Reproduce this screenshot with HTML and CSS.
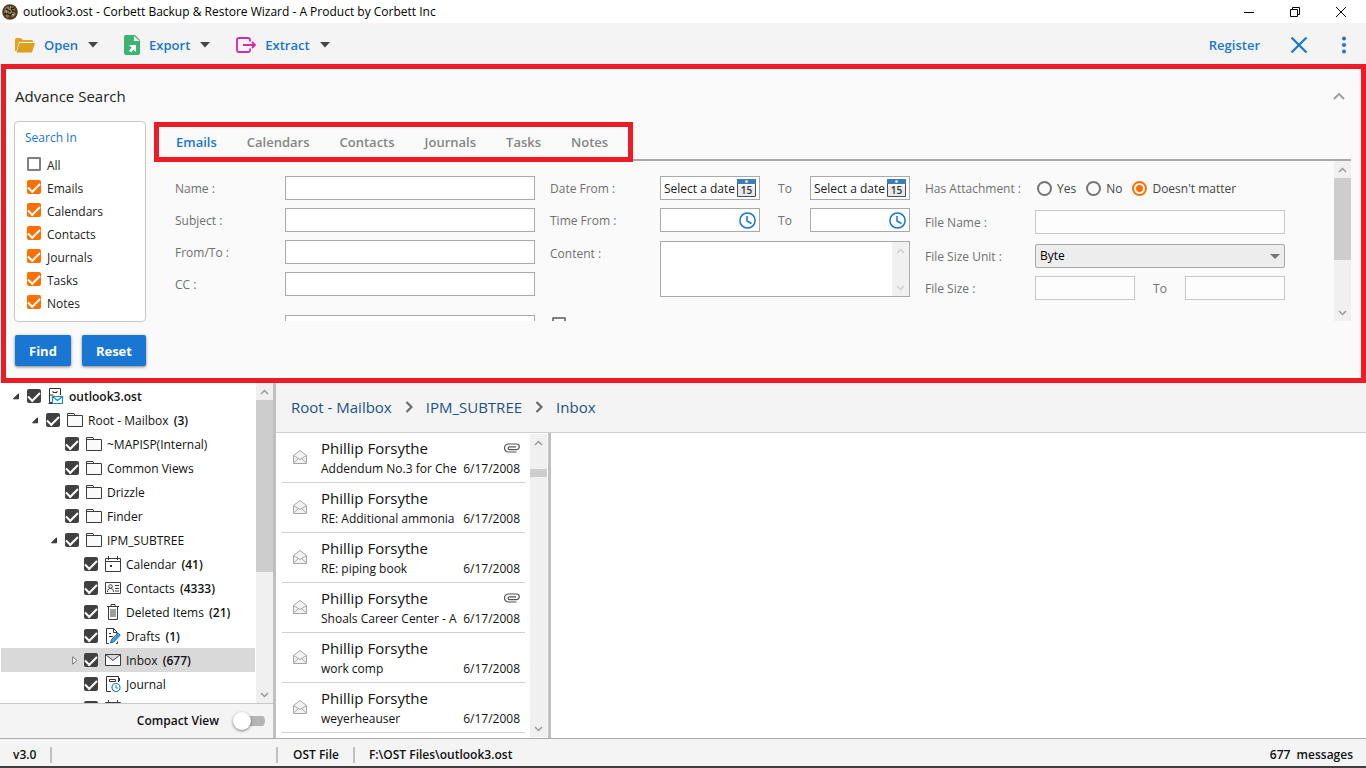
FILE: index.html
```html
<!DOCTYPE html>
<html lang="en">
<head>
    <meta charset="UTF-8">
    <meta name="viewport" content="width=device-width, initial-scale=1.0">
    <title>Corbett Backup &amp; Restore Wizard</title>
    <link rel="stylesheet" href="styles.css">
</head>
<body>
    <!-- Shared icons -->
    <svg class="sprite" aria-hidden="true">
        <symbol id="i-down" viewBox="0 0 10 6"><path d="M0 0h10L5 5.500z" fill="#444"/></symbol>
        <symbol id="i-chev-up" viewBox="0 0 9 6"><path d="M1 5l3.500-3.500L8 5" fill="none" stroke="currentColor" stroke-width="1.500"/></symbol>
        <symbol id="i-chev-down" viewBox="0 0 9 6"><path d="M1 1l3.500 3.500L8 1" fill="none" stroke="currentColor" stroke-width="1.500"/></symbol>
        <symbol id="i-crumb" viewBox="0 0 8 12"><path d="M1.500 1l5 5-5 5" fill="none" stroke="#6b6b6b" stroke-width="2.200"/></symbol>
        <symbol id="i-open-node" viewBox="0 0 7 7"><path d="M5.500 0.800v5h-5z" fill="#404040" stroke="#333"/></symbol>
        <symbol id="i-closed-node" viewBox="0 0 6 9"><path d="M0.700 0.800v7.400L5 4.500z" fill="#fff" stroke="#777"/></symbol>
        <symbol id="i-folder" viewBox="0 0 16 16"><path d="M0.500 14.500v-13h6.500l1 2h7.500v11zM0.500 3.500h7.500" fill="#fafafa" stroke="#3c3c3c"/></symbol>
        <symbol id="i-store" viewBox="0 0 16 16"><path d="M4 14.500H1.500V0.500h11V7M1.500 7h4M5 3v1.500h4V3M0.500 15.500h4" fill="none" stroke="#333"/><path d="M4.500 8.500h10v7h-10zM4.500 8.500l5 4 5-4" fill="#fff" stroke="#1e86d0" stroke-width="1.200"/></symbol>
        <symbol id="i-calendar" viewBox="0 0 16 16"><path d="M0.500 2.500h15v13H0.500zM0.500 5.500h15M3.500 0v4M12.500 0v4" fill="none" stroke="#3c3c3c"/><path d="M5 9h2v2H5z" fill="#333"/></symbol>
        <symbol id="i-contacts" viewBox="0 0 16 16"><path d="M0.500 2.500h15v11H0.500z" fill="none" stroke="#3c3c3c"/><circle cx="5.500" cy="6.500" r="1.800" fill="none" stroke="#3c3c3c"/><path d="M2.500 12c0-5 6-5 6 0M10 5.500h4M10 8.500h4M10 11h4" fill="none" stroke="#3c3c3c"/></symbol>
        <symbol id="i-trash" viewBox="0 0 16 16"><path d="M2 2.500h12M6 2V0.500h4V2M3.500 3v12.500h9V3M6 5v8M8 5v8M10 5v8" fill="none" stroke="#3c3c3c"/></symbol>
        <symbol id="i-draft" viewBox="0 0 16 16"><path d="M4 15.500H1.500V0.500h7l3.500 3.500v2M8.500 0.500V4.500H12M4 5.500h2M4 8.500h4M11 15.500h1.500v-2" fill="none" stroke="#333"/><path d="M5.500 15l1-3.500 6.500-6.500 2.200 2.200L8.700 14z" fill="#4f9ad8" stroke="#1667b0"/></symbol>
        <symbol id="i-mail" viewBox="0 0 16 16"><path d="M0.500 2.500h15v11H0.500zM0.500 2.500L8 8.500l7.500-6" fill="#fff" stroke="#3c3c3c"/></symbol>
        <symbol id="i-journal" viewBox="0 0 16 16"><path d="M6 15.500H1.500V0.500h12V6M4.500 3.500h6v2h-6zM14.500 2v3" fill="none" stroke="#333"/><circle cx="11" cy="11.500" r="4" fill="#fff" stroke="#1e86d0" stroke-width="1.200"/><path d="M11 9v3h2" fill="none" stroke="#1e86d0"/></symbol>
        <symbol id="i-read" viewBox="0 0 14 14"><path d="M0.500 5.500L7 0.500l6.500 5v8h-13z" fill="#f3f3f3" stroke="#a6a6a6"/><path d="M0.500 5.500L7 9.500l6.500-4M0.500 13l5-4.500M13.500 13l-5-4.500" fill="none" stroke="#a6a6a6"/></symbol>
        <symbol id="i-clip" viewBox="0 0 16 10"><path d="M12.500 9H4.500a4 4 0 0 1 0-8h8a2.700 2.700 0 0 1 0 5.600H5.500a1.400 1.400 0 0 1 0-2.800H12" fill="none" stroke="#555" stroke-width="1.200"/></symbol>
        <symbol id="i-date" viewBox="0 0 19 18"><path d="M0.500 0.500h18v17H0.500z" fill="#e9eaec" stroke="#4a4f57"/><path d="M0 0h19v5H0z" fill="#3f7fb8"/><path d="M1 5h17v2H1z" fill="#fff"/><circle cx="9.500" cy="2.500" r="1.300" fill="#fff"/><text x="9.500" y="15" class="date-num">15</text></symbol>
        <symbol id="i-clock" viewBox="0 0 17 17"><circle cx="8.500" cy="8.500" r="7.600" fill="#fff" stroke="#1976d2" stroke-width="1.500"/><path d="M8 4v5l4.500 2.500" fill="none" stroke="#1976d2" stroke-width="1.500"/></symbol>
    </svg>

    <header class="titlebar">
        <svg class="app-icon" viewBox="0 0 16 16"><circle cx="8" cy="8" r="7.800" fill="#4a3a22"/><path d="M3 4l3-2 2 2 3-2 2 3-1 3 2 2-3 3-3-1-3 2-2-3-1-3z" fill="#8f7748"/><path d="M4 5l2 1M9 5l3-1M5 9c1 2 4 3 6 0M7 6l1 2M10 7h2M3 9l1 2" stroke="#1d1810" stroke-width="1.500" fill="none"/><path d="M10 10l2 1M4 7h1M8 3h1" stroke="#e6dcc0"/></svg>
        <span class="caption">outlook3.ost - Corbett Backup &amp; Restore Wizard - A Product by Corbett Inc</span>
        <button class="win-btn" aria-label="Minimize"><svg width="10" height="10"><path d="M0 5.500h10" stroke="#000"/></svg></button>
        <button class="win-btn" aria-label="Restore"><svg width="10" height="10"><path d="M0.500 2.500h7v7h-7zM2.500 2.500v-2h7v7h-2" fill="none" stroke="#000"/></svg></button>
        <button class="win-btn" aria-label="Close window"><svg width="10" height="10"><path d="M0 0l10 10M10 0L0 10" stroke="#000"/></svg></button>
    </header>

    <div class="toolbar">
        <button class="tool">
            <svg width="20" height="16"><path d="M0 14V2.500Q0 1 1.500 1H6l2 2h8.500Q18 3 18 4.500V5H4L1.500 14z" fill="#e0a526"/><path d="M4.500 6H20l-2.500 8q-.4 1.500-1.500 1.500H1.500z" fill="#dba11c"/></svg>
            <span>Open</span><svg width="10" height="6"><use href="#i-down"/></svg>
        </button>
        <button class="tool">
            <svg width="16" height="20"><path d="M2 0h9l5 5v13q0 2-2 2H2q-2 0-2-2V2q0-2 2-2z" fill="#3cb371"/><path d="M10 1v5h5.500z" fill="#fff"/><path d="M5 10h7v7l-2.300-2.300L7 17.500 5 15.500l2.700-2.700z" fill="#fff"/></svg>
            <span>Export</span><svg width="10" height="6"><use href="#i-down"/></svg>
        </button>
        <button class="tool">
            <svg width="20" height="16"><path d="M14 4.500V3q0-2-2-2H3Q1 1 1 3v10q0 2 2 2h9q2 0 2-2v-1.500M7 8h12M16 5l3 3-3 3" fill="none" stroke="#d12ba8" stroke-width="1.800"/></svg>
            <span>Extract</span><svg width="10" height="6"><use href="#i-down"/></svg>
        </button>
        <a class="register" href="#">Register</a>
        <button class="icon-btn" aria-label="Close file"><svg width="18" height="18"><path d="M1.500 1.500l15 15M16.500 1.500l-15 15" stroke="#1976d2" stroke-width="2.200"/></svg></button>
        <button class="icon-btn" aria-label="More"><svg width="4" height="18" fill="#1976d2"><circle cx="2" cy="2.500" r="2"/><circle cx="2" cy="9" r="2"/><circle cx="2" cy="15.500" r="2"/></svg></button>
    </div>

    <section class="search">
        <div class="search-head">
            <h1>Advance Search</h1>
            <button class="icon-btn collapse" aria-label="Collapse"><svg width="12" height="8"><path d="M1 7l5-5 5 5" fill="none" stroke="#a0a0a0" stroke-width="2"/></svg></button>
        </div>
        <div class="search-body">
            <fieldset class="search-in">
                <h2>Search In</h2>
                <label><input type="checkbox">All</label>
                <label><input type="checkbox" checked>Emails</label>
                <label><input type="checkbox" checked>Calendars</label>
                <label><input type="checkbox" checked>Contacts</label>
                <label><input type="checkbox" checked>Journals</label>
                <label><input type="checkbox" checked>Tasks</label>
                <label><input type="checkbox" checked>Notes</label>
            </fieldset>
            <div class="criteria">
                <div class="tab-row">
                    <nav class="tabs">
                        <button class="active">Emails</button>
                        <button>Calendars</button>
                        <button>Contacts</button>
                        <button>Journals</button>
                        <button>Tasks</button>
                        <button>Notes</button>
                    </nav>
                </div>
                <div class="scroller">
                    <form class="form">
                        <div class="col">
                            <div class="row"><label for="name">Name :</label><input class="box" id="name" type="text"></div>
                            <div class="row"><label for="subject">Subject :</label><input class="box" id="subject" type="text"></div>
                            <div class="row"><label for="from">From/To :</label><input class="box" id="from" type="text"></div>
                            <div class="row"><label for="cc">CC :</label><input class="box" id="cc" type="text"></div>
                            <div class="row next"><span></span><input class="box" type="text" aria-label="BCC"></div>
                        </div>
                        <div class="col">
                            <div class="row">
                                <label for="date-from">Date From :</label>
                                <div class="range">
                                    <div class="box picker"><input id="date-from" type="text" value="Select a date"><button type="button" aria-label="Pick start date"><svg width="19" height="18"><use href="#i-date"/></svg></button></div>
                                    <label for="date-to">To</label>
                                    <div class="box picker"><input id="date-to" type="text" value="Select a date"><button type="button" aria-label="Pick end date"><svg width="19" height="18"><use href="#i-date"/></svg></button></div>
                                </div>
                            </div>
                            <div class="row">
                                <label for="time-from">Time From :</label>
                                <div class="range">
                                    <div class="box picker"><input id="time-from" type="text"><button type="button" aria-label="Pick start time"><svg width="17" height="17"><use href="#i-clock"/></svg></button></div>
                                    <label for="time-to">To</label>
                                    <div class="box picker"><input id="time-to" type="text"><button type="button" aria-label="Pick end time"><svg width="17" height="17"><use href="#i-clock"/></svg></button></div>
                                </div>
                            </div>
                            <div class="row tall">
                                <label for="content">Content :</label>
                                <div class="box memo">
                                    <textarea id="content"></textarea>
                                    <div class="scrollbar disabled"><svg width="9" height="6"><use href="#i-chev-up"/></svg><div class="track"></div><svg width="9" height="6"><use href="#i-chev-down"/></svg></div>
                                </div>
                            </div>
                            <input class="extra" type="checkbox" aria-label="Exact match">
                        </div>
                        <div class="col wide">
                            <div class="row">
                                <span>Has Attachment :</span>
                                <div class="radios">
                                    <label><input type="radio" name="att">Yes</label>
                                    <label><input type="radio" name="att">No</label>
                                    <label><input type="radio" name="att" checked>Doesn't matter</label>
                                </div>
                            </div>
                            <div class="row"><label for="file-name">File Name :</label><input class="box off" id="file-name" type="text" disabled></div>
                            <div class="row">
                                <label for="unit">File Size Unit :</label>
                                <div class="select">
                                    <select id="unit"><option>Byte</option><option>KB</option><option>MB</option></select>
                                </div>
                            </div>
                            <div class="row">
                                <label for="size-from">File Size :</label>
                                <div class="range">
                                    <input class="box off" id="size-from" type="text" disabled>
                                    <label for="size-to">To</label>
                                    <input class="box off" id="size-to" type="text" disabled>
                                </div>
                            </div>
                        </div>
                    </form>
                    <div class="scrollbar"><svg width="9" height="6"><use href="#i-chev-up"/></svg><div class="track"><div class="thumb form-thumb"></div></div><svg width="9" height="6"><use href="#i-chev-down"/></svg></div>
                </div>
            </div>
        </div>
        <div class="actions">
            <button>Find</button>
            <button>Reset</button>
        </div>
    </section>

    <main>
        <aside>
            <div class="tree-wrap">
                <ul class="tree">
                    <li class="l0"><i><svg width="7" height="7"><use href="#i-open-node"/></svg></i><label><input type="checkbox" checked><svg width="16" height="16"><use href="#i-store"/></svg><b>outlook3.ost</b></label></li>
                    <li class="l1"><i><svg width="7" height="7"><use href="#i-open-node"/></svg></i><label><input type="checkbox" checked><svg width="16" height="16"><use href="#i-folder"/></svg>Root - Mailbox <b>(3)</b></label></li>
                    <li class="l2"><i></i><label><input type="checkbox" checked><svg width="16" height="16"><use href="#i-folder"/></svg>~MAPISP(Internal)</label></li>
                    <li class="l2"><i></i><label><input type="checkbox" checked><svg width="16" height="16"><use href="#i-folder"/></svg>Common Views</label></li>
                    <li class="l2"><i></i><label><input type="checkbox" checked><svg width="16" height="16"><use href="#i-folder"/></svg>Drizzle</label></li>
                    <li class="l2"><i></i><label><input type="checkbox" checked><svg width="16" height="16"><use href="#i-folder"/></svg>Finder</label></li>
                    <li class="l2"><i><svg width="7" height="7"><use href="#i-open-node"/></svg></i><label><input type="checkbox" checked><svg width="16" height="16"><use href="#i-folder"/></svg>IPM_SUBTREE</label></li>
                    <li class="l3"><i></i><label><input type="checkbox" checked><svg width="16" height="16"><use href="#i-calendar"/></svg>Calendar <b>(41)</b></label></li>
                    <li class="l3"><i></i><label><input type="checkbox" checked><svg width="16" height="16"><use href="#i-contacts"/></svg>Contacts <b>(4333)</b></label></li>
                    <li class="l3"><i></i><label><input type="checkbox" checked><svg width="16" height="16"><use href="#i-trash"/></svg>Deleted Items <b>(21)</b></label></li>
                    <li class="l3"><i></i><label><input type="checkbox" checked><svg width="16" height="16"><use href="#i-draft"/></svg>Drafts <b>(1)</b></label></li>
                    <li class="l3 selected"><i class="closed"><svg width="6" height="9"><use href="#i-closed-node"/></svg></i><label><input type="checkbox" checked><svg width="16" height="16"><use href="#i-mail"/></svg>Inbox <b>(677)</b></label></li>
                    <li class="l3"><i></i><label><input type="checkbox" checked><svg width="16" height="16"><use href="#i-journal"/></svg>Journal</label></li>
                    <li class="l3"><i></i><label><input type="checkbox" checked aria-label="Next folder"><svg width="16" height="16"><use href="#i-calendar"/></svg></label></li>
                </ul>
                <div class="scrollbar"><svg width="9" height="6"><use href="#i-chev-up"/></svg><div class="track"><div class="thumb tree-thumb"></div></div><svg width="9" height="6"><use href="#i-chev-down"/></svg></div>
            </div>
            <label class="compact">Compact View <input type="checkbox" class="switch"></label>
        </aside>
        <div class="content">
            <nav class="crumbs">
                <a href="#">Root - Mailbox</a>
                <svg width="8" height="12"><use href="#i-crumb"/></svg>
                <a href="#">IPM_SUBTREE</a>
                <svg width="8" height="12"><use href="#i-crumb"/></svg>
                <a href="#">Inbox</a>
            </nav>
            <div class="panes">
                <div class="list-wrap">
                    <ul class="mails">
                        <li><svg class="env" width="14" height="14"><use href="#i-read"/></svg><div><p class="from">Phillip Forsythe <svg width="16" height="10"><use href="#i-clip"/></svg></p><p class="sub"><span>Addendum No.3 for Che</span><time>6/17/2008</time></p></div></li>
                        <li><svg class="env" width="14" height="14"><use href="#i-read"/></svg><div><p class="from">Phillip Forsythe</p><p class="sub"><span>RE: Additional ammonia</span><time>6/17/2008</time></p></div></li>
                        <li><svg class="env" width="14" height="14"><use href="#i-read"/></svg><div><p class="from">Phillip Forsythe</p><p class="sub"><span>RE: piping book</span><time>6/17/2008</time></p></div></li>
                        <li><svg class="env" width="14" height="14"><use href="#i-read"/></svg><div><p class="from">Phillip Forsythe <svg width="16" height="10"><use href="#i-clip"/></svg></p><p class="sub"><span>Shoals Career Center - A</span><time>6/17/2008</time></p></div></li>
                        <li><svg class="env" width="14" height="14"><use href="#i-read"/></svg><div><p class="from">Phillip Forsythe</p><p class="sub"><span>work comp</span><time>6/17/2008</time></p></div></li>
                        <li><svg class="env" width="14" height="14"><use href="#i-read"/></svg><div><p class="from">Phillip Forsythe</p><p class="sub"><span>weyerheauser</span><time>6/17/2008</time></p></div></li>
                    </ul>
                    <div class="scrollbar"><svg width="9" height="6"><use href="#i-chev-up"/></svg><div class="track"><div class="thumb list-thumb"></div></div><svg width="9" height="6"><use href="#i-chev-down"/></svg></div>
                </div>
                <div class="preview"></div>
            </div>
        </div>
    </main>

    <footer class="status">
        <span class="version">v3.0</span>
        <span class="kind">OST File</span>
        <span class="path">F:\OST Files\outlook3.ost</span>
        <span class="count">677&nbsp; messages</span>
    </footer>
</body>
</html>
```
FILE: styles.css
```css
* {
    box-sizing: border-box;
}
body {
    margin: 0;
    height: 100vh;
    display: flex;
    flex-direction: column;
    overflow: hidden;
    background: #fff;
    color: #111;
    font: 12px/16px "Open Sans", "Noto Sans", sans-serif;
}
h1, h2, p, ul, fieldset {
    margin: 0;
    padding: 0;
    list-style: none;
}
button, input, select, textarea {
    font: inherit;
    color: inherit;
    margin: 0;
}
button {
    border: 0;
    padding: 0;
    background: none;
    cursor: pointer;
}
svg {
    flex: none;
    display: block;
}
b {
    font-weight: 600;
}
.sprite {
    display: none;
}

/* Title bar */
.titlebar {
    height: 23px;
    display: flex;
    align-items: center;
    padding: 0 2px;
    color: #000;
}
.app-icon {
    width: 16px;
    height: 16px;
    margin-right: 5px;
}
.caption {
    flex: 1;
}
.win-btn {
    width: 46px;
    height: 20px;
    display: flex;
    align-items: center;
    justify-content: center;
}

/* Toolbar */
.toolbar {
    height: 41px;
    flex: none;
    display: flex;
    align-items: center;
    padding: 2px 20px 0 15px;
    background: #f4f4f4;
    font-size: 13px;
    font-weight: 600;
    color: #1976d2;
}
.tool {
    display: flex;
    align-items: center;
    margin-right: 26px;
}
.tool span {
    margin: 0 10px 0 9px;
}
.register {
    margin-left: auto;
    margin-right: 30px;
    color: #1976d2;
    text-decoration: none;
}
.icon-btn + .icon-btn {
    margin-left: 34px;
}

/* Search panel */
.search {
    flex: none;
    margin-left: 1px;
    border: 5px solid #ed1c24;
    background: #fafafa;
    padding: 15px 10px 12px 8px;
}
.search-head {
    display: flex;
    justify-content: space-between;
    align-items: center;
    height: 24px;
    margin-bottom: 13px;
    padding: 0 6px 0 1px;
}
h1 {
    font-size: 15px;
    font-weight: 400;
    color: #222;
}
.search-body {
    display: flex;
    gap: 8px;
    height: 201px;
}
.search-in {
    width: 132px;
    border: 1px solid #c8c8c8;
    border-radius: 4px;
    background: #fff;
    padding: 8px 0 0 10px;
}
h2 {
    font-size: 12px;
    font-weight: 400;
    color: #1976d2;
    margin-bottom: 8px;
}
.search-in label {
    display: flex;
    align-items: center;
    gap: 6px;
    height: 23px;
    padding-left: 2px;
    color: #222;
}
input[type="checkbox"] {
    appearance: none;
    flex: none;
    width: 14px;
    height: 14px;
    border: 2px solid #808080;
    border-radius: 1px;
    background: #fff;
    display: grid;
    place-items: center;
}
input[type="checkbox"]:checked {
    border: 0;
    border-radius: 2px;
    background: #404040;
}
.search-in input[type="checkbox"] {
    margin-bottom: 3px;
}
.search-in input[type="checkbox"]:checked {
    background: #ff6f00;
}
input[type="checkbox"]:checked::after {
    content: "";
    width: 10px;
    height: 5px;
    border: solid #fff;
    border-width: 0 0 2px 2px;
    transform: translateY(-1px) rotate(-45deg);
}
.criteria {
    flex: 1;
    display: flex;
    flex-direction: column;
    padding: 1px 0;
}
.tab-row {
    height: 39px;
    flex: none;
    border-bottom: 2px solid #a9a9a9;
}
.tabs {
    width: 479px;
    height: 40px;
    position: relative;
    display: flex;
    gap: 30px;
    padding-left: 17px;
    border: 5px solid #ed1c24;
    background: #fafafa;
}
.tabs button {
    font-size: 13px;
    font-weight: 600;
    color: #858585;
}
.tabs .active {
    color: #1976d2;
}
.scroller {
    flex: 1;
    min-height: 0;
    display: flex;
    overflow: hidden;
}
.form {
    flex: 1;
    display: flex;
    gap: 15px;
    padding: 15px 0 0 21px;
    color: #707070;
}
.col {
    width: 360px;
    display: flex;
    flex-direction: column;
    gap: 8px;
}
.row {
    display: grid;
    grid-template-columns: 110px 250px;
    align-items: center;
    height: 24px;
    flex: none;
}
.row label, .row > span {
    padding-top: 2px;
}
.row.tall {
    height: 56px;
    align-items: start;
    margin-top: 1px;
}
.row.tall label {
    padding-top: 5px;
}
.row.next {
    margin-top: 11px;
}
.wide .row:nth-child(-n+2) {
    margin-bottom: 2px;
}
.box {
    width: 100%;
    height: 24px;
    border: 1px solid #a9a9a9;
    background: #fff;
}
.box.off {
    border-color: #c8c8c8;
    background: #fdfdfd;
}
.range {
    display: grid;
    grid-template-columns: 100px 50px 100px;
    align-items: center;
    text-align: center;
}
.picker {
    display: flex;
    align-items: center;
    justify-content: space-between;
    padding: 0 3px;
    color: #222;
}
.picker input {
    width: 72px;
    border: 0;
    padding: 2px 0 0;
    background: none;
}
.date-num {
    font: 600 10px "Open Sans", sans-serif;
    text-anchor: middle;
    fill: #333;
}
.memo {
    height: 56px;
    display: flex;
}
.memo textarea {
    flex: 1;
    min-width: 0;
    border: 0;
    padding: 4px;
    resize: none;
}
.extra {
    margin: 12px 0 0 2px;
}
.radios {
    display: flex;
    gap: 10px;
    padding-left: 2px;
    color: #444;
}
.radios label {
    display: flex;
    align-items: center;
    gap: 5px;
    white-space: nowrap;
}
.radios input {
    appearance: none;
    flex: none;
    width: 15px;
    height: 15px;
    margin-bottom: 2px;
    border: 2px solid #757575;
    border-radius: 50%;
}
.radios input:checked {
    border-color: #ff6f00;
    background: radial-gradient(#ff6f00 3px, transparent 4px);
}
.select {
    display: grid;
    align-items: center;
}
.select select {
    grid-area: 1 / 1;
    appearance: none;
    height: 24px;
    padding: 0 4px;
    border: 1px solid #a9a9a9;
    border-radius: 2px;
    background: #ededed;
    color: #000;
}
.select::after {
    content: "";
    grid-area: 1 / 1;
    justify-self: end;
    margin-right: 5px;
    border: 5px solid transparent;
    border-top-color: #757575;
    border-bottom: 0;
    pointer-events: none;
}
.actions {
    display: flex;
    gap: 11px;
    padding: 13px 0 0 1px;
}
.actions button {
    height: 31px;
    padding: 0 14px;
    border-radius: 2px;
    background: #1976d2;
    box-shadow: 0 1px 3px rgba(0, 0, 0, 0.5);
    color: #fff;
    font-size: 13px;
    font-weight: 700;
}

/* Scroll bars */
.scrollbar {
    flex: none;
    width: 17px;
    display: flex;
    flex-direction: column;
    align-items: center;
    padding: 6px 0 5px;
    background: #f0f0f0;
    color: #9a9a9a;
}
.scrollbar.disabled {
    color: #cfcfcf;
}
.track {
    flex: 1;
    width: 100%;
    margin: 5px 0;
}
.thumb {
    background: #cdcdcd;
}
.form-thumb {
    height: 82px;
}
.tree-thumb {
    height: 172px;
}
.list-thumb {
    height: 8px;
    margin-top: 18px;
}

/* Folder tree */
main {
    flex: 1;
    min-height: 0;
    display: flex;
}
aside {
    width: 276px;
    flex: none;
    display: flex;
    flex-direction: column;
    border-right: 3px solid #c0c0c0;
}
.tree-wrap {
    flex: 1;
    min-height: 0;
    display: flex;
    overflow: hidden;
}
.tree {
    flex: 1;
    padding: 1px 1px 0;
    overflow: hidden;
}
.tree li, .tree label {
    display: flex;
    align-items: center;
    height: 24px;
    white-space: pre;
}
.tree label {
    padding-top: 2px;
}
.tree i {
    width: 17px;
    padding-left: 3px;
}
.tree .closed {
    padding-left: 5px;
}
.tree input[type="checkbox"] {
    margin-bottom: 2px;
}
.tree label svg {
    margin: 0 5px 2px 7px;
}
.tree b {
    margin-left: 2px;
}
.tree .l0 b {
    margin-left: 0;
}
.l0 {
    padding-left: 9px;
}
.l1 {
    padding-left: 28px;
}
.l2 {
    padding-left: 47px;
}
.l3 {
    padding-left: 66px;
}
.selected {
    background: #d9d9d9;
}
.compact {
    height: 35px;
    flex: none;
    display: flex;
    align-items: center;
    justify-content: flex-end;
    gap: 14px;
    padding-right: 8px;
    border-top: 1px solid #c8c8c8;
    background: #f4f4f4;
    font-weight: 600;
}
.compact input.switch {
    width: 32px;
    height: 18px;
    border: 0;
    background: linear-gradient(#b5b5b5, #b5b5b5) right center / 24px 10px no-repeat;
    border-radius: 9px;
    justify-items: start;
}
.switch::before {
    content: "";
    width: 18px;
    height: 18px;
    border-radius: 50%;
    background: #fff;
    box-shadow: 0 1px 3px rgba(0, 0, 0, 0.5);
}

/* Messages */
.content {
    flex: 1;
    min-width: 0;
    display: flex;
    flex-direction: column;
}
.crumbs {
    height: 50px;
    flex: none;
    display: flex;
    align-items: center;
    gap: 13px;
    padding: 0 0 1px 15px;
    border-bottom: 1px solid #d0d0d0;
    background: #f4f4f4;
    font-size: 15px;
}
.crumbs a {
    color: #1a5288;
    text-decoration: none;
}
.panes {
    flex: 1;
    min-height: 0;
    display: flex;
}
.list-wrap {
    width: 275px;
    display: flex;
    justify-content: space-between;
    padding-left: 6px;
    border-right: 3px solid #c0c0c0;
}
.list-wrap .scrollbar {
    margin: 1px 1px 1px 0;
}
.mails {
    width: 243px;
    overflow: hidden;
}
.mails li {
    display: flex;
    align-items: center;
    gap: 14px;
    height: 50px;
    padding: 0 5px 0 11px;
    border-bottom: 1px solid #d0d0d0;
}
.mails li div {
    flex: 1;
    min-width: 0;
}
.env {
    margin-bottom: 2px;
}
.from {
    display: flex;
    justify-content: space-between;
    align-items: center;
    font-size: 15px;
    line-height: 22px;
}
.sub {
    display: flex;
    justify-content: space-between;
    line-height: 20px;
}
.sub span {
    white-space: nowrap;
}
.preview {
    flex: 1;
}

/* Status bar */
.status {
    height: 30px;
    flex: none;
    display: flex;
    align-items: center;
    padding: 4px 13px 0;
    border-top: 1px solid #a9a9a9;
    border-bottom: 2px solid #404040;
    background: #f4f4f4;
    font-weight: 600;
}
.version {
    width: 39px;
    border-right: 2px solid #c0c0c0;
}
.kind {
    margin-left: 224px;
    padding: 0 14px 0 15px;
    border: solid #c0c0c0;
    border-width: 0 2px;
}
.path {
    padding-left: 14px;
}
.count {
    margin-left: auto;
}
```
